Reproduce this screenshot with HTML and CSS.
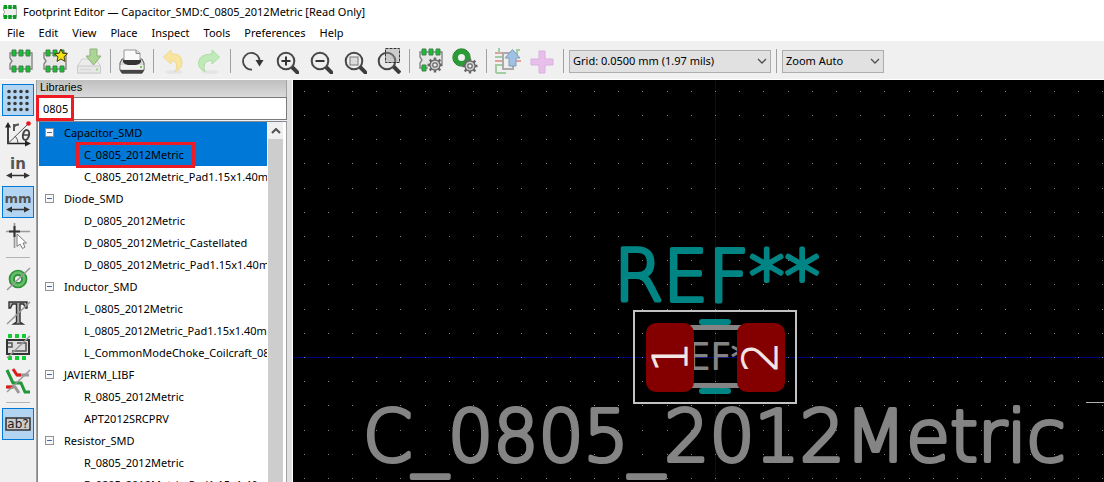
FILE: index.html
```html
<!DOCTYPE html>
<html lang="en">
<head>
<meta charset="utf-8">
<title>Footprint Editor — Capacitor_SMD:C_0805_2012Metric [Read Only]</title>
<link rel="stylesheet" href="styles.css">
</head>
<body>
<svg class="defs" aria-hidden="true">
  <defs>
    <g id="chip">
      <path d="M1 4H23V20H1V15L3 12L1 9Z" fill="#e6e6e6" stroke="#858585" stroke-width="1.4"/>
      <path d="M3 1h4v6H3zM10 1h4v6h-4zM17 1h4v6h-4zM3 17h4v6H3zM10 17h4v6h-4zM17 17h4v6h-4z" fill="#0fc42e" stroke="#4d7a50" stroke-width="1"/>
    </g>
    <g id="lens">
      <path d="M17 17L24 24" stroke="#3c3c3c" stroke-width="4"/>
      <circle cx="11" cy="11" r="8.3" fill="#efefef" stroke="#484848" stroke-width="2"/>
    </g>
    <g id="gear">
      <circle r="5" fill="#ccc" stroke="#666" stroke-width="1.4"/>
      <path d="M0-5V-7.500M0 5V7.500M-5 0H-7.500M5 0H7.500M-3.500-3.500L-5.300-5.300M3.500 3.500L5.300 5.300M-3.500 3.500L-5.300 5.300M3.500-3.500L5.300-5.300" stroke="#666" stroke-width="2.400"/>
      <circle r="4.300" fill="#ccc"/>
      <circle r="2.200" fill="#eee" stroke="#666" stroke-width="1.200"/>
    </g>
    <g id="slash"><path d="M1 23L24 1" stroke="#999" stroke-width="1.500"/></g>
  </defs>
</svg>

<header class="titlebar">
  <svg class="app-icon" viewBox="0 0 24 24"><path d="M1 4H23V20H1V15L3 12L1 9Z" fill="#eee" stroke="#999" stroke-width="1.500"/><path d="M1 0h6v7H1zM9 0h6v7H9zM17 0h6v7h-6zM1 17h6v7H1zM9 17h6v7H9zM17 17h6v7h-6z" fill="#0b9a25"/></svg>
  <h1>Footprint Editor — Capacitor_SMD:C_0805_2012Metric [Read Only]</h1>
</header>

<nav class="menubar">
  <button>File</button><button>Edit</button><button>View</button><button>Place</button><button>Inspect</button><button>Tools</button><button>Preferences</button><button>Help</button>
</nav>

<div class="toolbar" role="toolbar" aria-label="Main">
  <button class="tool" aria-label="New footprint"><svg viewBox="0 0 26 26"><use href="#chip" x="1" y="1"/></svg></button>
  <button class="tool" aria-label="New footprint with wizard"><svg viewBox="0 0 26 26"><use href="#chip" x="1" y="1"/><path d="M19 1L20.800 5.300L25.500 5.700L22 8.800L23 13.400L19 11L15 13.400L16 8.800L12.500 5.700L17.200 5.300Z" fill="#f5e212" stroke="#4a4310"/></svg></button>
  <button class="tool" aria-label="Save"><svg viewBox="0 0 26 26"><path d="M6 11H20L24.500 18V25H1.500V18Z" fill="#ececec" stroke="#cfcfcf"/><path d="M1.500 18H24.500V25H1.500Z" fill="#e7e7e7" stroke="#cacaca"/><path d="M4 21.500H15" stroke="#d6d6d6"/><path d="M20 21.500h2" stroke="#8fe07f" stroke-width="2"/><path d="M14 1h7v7h4L17.500 17L10 8h4Z" fill="#acd494" stroke="#8eb17c"/></svg></button>
  <span class="sep"></span>
  <button class="tool" aria-label="Print"><svg viewBox="0 0 26 26"><path d="M3 11H23L25 15V22L23 25H3L1 22V15Z" fill="#d9d9d9" stroke="#555"/><path d="M5 15V2H17L21 5V15Z" fill="#fafafa" stroke="#999"/><path d="M17 2V5.500H21" fill="#ddd" stroke="#888"/><path d="M4 12H22V14Q20 17 17 17H9Q6 17 4 14Z" fill="#333"/><path d="M1.500 17H24.500V21H1.500Z" fill="#f1f1f1"/><path d="M1 22H25L23 25.500H3Z" fill="#454545"/><path d="M21 19h2" stroke="#6dce43" stroke-width="2"/></svg></button>
  <span class="sep"></span>
  <button class="tool" aria-label="Undo"><svg viewBox="0 0 26 26"><ellipse cx="12" cy="24" rx="9" ry="2" fill="#e5e5e5"/><path d="M1.500 9L9 2V6Q20 5 20 15Q20 21 13 23.500Q16 20 14.500 16Q13 12.500 9 12.500V16Z" fill="#f8e6a0" stroke="#eed98c"/></svg></button>
  <button class="tool" aria-label="Redo"><svg viewBox="0 0 26 26"><ellipse cx="14" cy="24" rx="9" ry="2" fill="#e5e5e5"/><path d="M23.500 9L16 2V6Q3 6 2.500 15Q2.500 21 9 23.500Q7 20 8.500 16Q10 12.500 16 12.500V16Z" fill="#c0eab8" stroke="#abdda3"/></svg></button>
  <span class="sep"></span>
  <button class="tool" aria-label="Refresh"><svg viewBox="0 0 26 26"><path d="M13 21.500A8.300 8.300 0 1 1 20.600 13.500" fill="none" stroke="#484848" stroke-width="1.800"/><path d="M16.500 12H24.500L20.500 18.500Z" fill="#333"/></svg></button>
  <button class="tool" aria-label="Zoom in"><svg viewBox="0 0 26 26"><use href="#lens" x="2" y="2"/><path d="M8.500 13H17.500M13 8.500V17.500" stroke="#333" stroke-width="2"/></svg></button>
  <button class="tool" aria-label="Zoom out"><svg viewBox="0 0 26 26"><use href="#lens" x="2" y="2"/><path d="M8.500 13H17.500" stroke="#333" stroke-width="2"/></svg></button>
  <button class="tool" aria-label="Zoom to fit"><svg viewBox="0 0 26 26"><use href="#lens" x="2" y="2"/><rect x="9" y="9" width="8" height="8" fill="#ddd" stroke="#777"/></svg></button>
  <button class="tool" aria-label="Zoom to selection"><svg viewBox="0 0 26 26"><path d="M18 18L25 25" stroke="#3c3c3c" stroke-width="4"/><circle cx="12" cy="13" r="8.300" fill="#e9e9e9" stroke="#484848" stroke-width="2"/><rect x="10.500" y=".5" width="14" height="14" fill="#999" fill-opacity=".4" stroke="#333" stroke-dasharray="3 1"/></svg></button>
  <span class="sep"></span>
  <button class="tool" aria-label="Footprint properties"><svg viewBox="0 0 26 26"><use href="#chip" x="1"/><path d="M10 16H25V25H10Z" fill="#efefef"/><use href="#gear" x="17" y="17"/></svg></button>
  <button class="tool" aria-label="Default pad properties"><svg viewBox="0 0 26 26"><circle cx="9.500" cy="9.500" r="6" fill="none" stroke="#2a9c35" stroke-width="5"/><circle cx="9.500" cy="9.500" r="8.700" fill="none" stroke="#1a7e25"/><use href="#gear" x="18" y="18"/></svg></button>
  <span class="sep"></span>
  <button class="tool" aria-label="Load footprint from board"><svg viewBox="0 0 26 26"><path d="M0 5H8M0 13H8M20 13H26" stroke="#e2a09a" stroke-width="2"/><path d="M0 9H7M1 25V17H8M1 25H11M22 7V2H25" fill="none" stroke="#a0cda4" stroke-width="2"/><path d="M4 0V5" stroke="#a0cda4" stroke-width="2"/><path d="M8 5H18V21H8Z" fill="#eee" stroke="#aaa" stroke-width="2"/><path d="M14 18V10H10L17.500 1.500L25 10H21V18Z" fill="#9fc1e5" stroke="#839bb5"/></svg></button>
  <button class="tool" aria-label="Insert footprint into board"><svg viewBox="0 0 26 26"><path d="M10 3H16V11H24V17H16V25H10V17H2V11H10Z" fill="#e8bfea" stroke="#dcaee0"/></svg></button>
  <span class="sep"></span>
  <span class="combo combo-grid"><select aria-label="Grid"><option>Grid: 0.0500 mm (1.97 mils)</option></select><svg viewBox="0 0 10 6"><path d="M1 1L5 5L9 1" fill="none" stroke="#505050" stroke-width="1.300"/></svg></span>
  <span class="sep"></span>
  <span class="combo combo-zoom"><select aria-label="Zoom"><option>Zoom Auto</option></select><svg viewBox="0 0 10 6"><path d="M1 1L5 5L9 1" fill="none" stroke="#505050" stroke-width="1.300"/></svg></span>
</div>

<main class="workspace">
  <div class="sidebar" role="toolbar" aria-label="Display options">
    <button class="opt on" aria-label="Show grid" aria-pressed="true"><svg viewBox="0 0 26 26"><path d="M4 4.500H23M4 10.500H23M4 16.500H23M4 22.500H23" stroke="#3a3a3a" stroke-width="3.600" stroke-linecap="round" stroke-dasharray="0 6"/></svg></button>
    <button class="opt" aria-label="Polar coordinates"><svg viewBox="0 0 26 26"><path d="M3 5V22.500H22" fill="none" stroke="#222" stroke-width="1.700"/><path d="M0 6.500L3 1L6 6.500ZM20 19.500L26 22.500L20 25.500Z" fill="#222"/><path d="M3 22.500L22 4M10 15Q13 18 13 22" fill="none" stroke="#555"/><circle cx="23.500" cy="2.500" r="2.300" fill="#f01414"/><path d="M9 10V3M9 6Q10 3.500 14 3.500" fill="none" stroke="#555" stroke-width="2"/><ellipse cx="21" cy="14" rx="3" ry="5" fill="none" stroke="#444" stroke-width="2" transform="rotate(14 21 14)"/><path d="M18 14H24" stroke="#444" stroke-width="1.500"/></svg></button>
    <button class="opt" aria-label="Inches"><svg viewBox="0 0 26 26"><text class="unit" x="13" y="14" text-anchor="middle">in</text><path d="M4 20.500H22" stroke="#333" stroke-width="1.500"/><path d="M1 20.500L7 17.500V23.500ZM25 20.500L19 17.500V23.500Z" fill="#333"/></svg></button>
    <button class="opt on" aria-label="Millimeters" aria-pressed="true"><svg viewBox="0 0 26 26"><text class="unit unit-mm" x="13" y="14" text-anchor="middle">mm</text><path d="M4 20.500H22" stroke="#333" stroke-width="1.500"/><path d="M1 20.500L7 17.500V23.500ZM25 20.500L19 17.500V23.500Z" fill="#333"/></svg></button>
    <button class="opt" aria-label="Full-window crosshair"><svg viewBox="0 0 26 26"><path d="M1 8.500H25M9.500 0V25" stroke="#999" stroke-width="1.700"/><path d="M4 8.500H15M9.500 3V14" stroke="#333" stroke-width="2"/><path d="M12 11V23.500L15 21L17.500 25.500L20 24L18 20H21.500Z" fill="#fff" stroke="#777"/></svg></button>
    <span class="rule"></span>
    <button class="opt" aria-label="Sketch pads"><svg viewBox="0 0 26 26"><circle cx="13" cy="13" r="8.500" fill="#65bd6b" stroke="#2c9137" stroke-width="1.700"/><circle cx="13" cy="13" r="4" fill="#efefef" stroke="#2c9137" stroke-width="1.800"/><use href="#slash" x="1" y="1"/></svg></button>
    <button class="opt" aria-label="Sketch text"><svg viewBox="0 0 26 26"><path d="M4 2H22V8H20.500L18.500 4H15V22L18 24H8.500L11.500 22V4H7.500L5.500 8H4Z" fill="#aaa" stroke="#333" stroke-width="1.400"/><use href="#slash" x="1" y="1"/></svg></button>
    <button class="opt" aria-label="Sketch graphics"><svg viewBox="0 0 26 26"><path d="M3 2H7M10 2H14M17 2H21M3 24H7M10 24H14M17 24H21" stroke="#12cb32" stroke-width="4"/><rect x="2" y="6" width="22" height="14" fill="#ddd" stroke="#333" stroke-width="2"/><path d="M3 9H7V13H3M7 17H21V9H12" fill="none" stroke="#555" stroke-width="1.500"/><use href="#slash" x="1" y="1"/></svg></button>
    <button class="opt" aria-label="High contrast"><svg viewBox="0 0 26 26"><path d="M2 2L8 15H16L20 24H25" fill="none" stroke="#20983a" stroke-width="3"/><path d="M12 7H24M2 19H10L14 25" fill="none" stroke="#999" stroke-width="3"/><path d="M8 1L12 7H16M1 19H8" fill="none" stroke="#dc1b1b" stroke-width="3"/><use href="#slash" x="1" y="1"/></svg></button>
    <span class="rule"></span>
    <button class="opt on" aria-label="Show libraries" aria-pressed="true"><svg viewBox="0 0 26 26"><rect x="1" y="7" width="24" height="12" fill="#ccc" stroke="#333" stroke-width="1.500"/><text class="unit-ab" x="13" y="17" text-anchor="middle">ab?</text></svg></button>
  </div>

  <section class="panel">
    <h2>Libraries</h2>
    <label class="search"><input type="text" value="0805" aria-label="Filter"></label>
    <div class="tree">
      <ul class="groups">
        <li><div class="row group selected"><button class="toggle" aria-label="Collapse"></button>Capacitor_SMD</div>
          <ul><li class="row selected"><span class="marked">C_0805_2012Metric</span></li><li class="row">C_0805_2012Metric_Pad1.15x1.40mm_HandSolder</li></ul></li>
        <li><div class="row group"><button class="toggle" aria-label="Collapse"></button>Diode_SMD</div>
          <ul><li class="row">D_0805_2012Metric</li><li class="row">D_0805_2012Metric_Castellated</li><li class="row">D_0805_2012Metric_Pad1.15x1.40mm_HandSolder</li></ul></li>
        <li><div class="row group"><button class="toggle" aria-label="Collapse"></button>Inductor_SMD</div>
          <ul><li class="row">L_0805_2012Metric</li><li class="row">L_0805_2012Metric_Pad1.15x1.40mm_HandSolder</li><li class="row">L_CommonModeChoke_Coilcraft_0805USB</li></ul></li>
        <li><div class="row group"><button class="toggle" aria-label="Collapse"></button>JAVIERM_LIBF</div>
          <ul><li class="row">R_0805_2012Metric</li><li class="row">APT2012SRCPRV</li></ul></li>
        <li><div class="row group"><button class="toggle" aria-label="Collapse"></button>Resistor_SMD</div>
          <ul><li class="row">R_0805_2012Metric</li><li class="row">R_0805_2012Metric_Pad1.15x1.40mm_HandSolder</li></ul></li>
      </ul>
      <div class="scrollbar"><button aria-label="Scroll up"><svg viewBox="0 0 10 6"><path d="M1 5L5 1L9 5" fill="none" stroke="#505050" stroke-width="2"/></svg></button><div class="thumb"></div></div>
    </div>
  </section>

  <svg class="board" role="img" aria-label="C_0805_2012Metric footprint">
    <g transform="translate(422 277)">
      <path class="axis" d="M-2000 .5H2000M.5-2000V2000"/>
      <path id="grid" class="grid"/>
      <text class="fab-text big" x="-352" y="104">C_0805_2012Metric</text>
      <text class="silk-text big" x="-101" y="-56">REF**</text>
      <text class="fab-text small" x="0" y="12" text-anchor="middle">REF**</text>
      <path class="fab" d="M-25-29.500H27M-25 28.500H27"/>
      <path class="silk" d="M-13-35H13M-13 34H13"/>
      <rect class="pad" x="-69" y="-34" width="48" height="69" rx="10"/>
      <rect class="pad" x="22" y="-34" width="48" height="69" rx="10"/>
      <text class="number" transform="translate(-28 0) rotate(-90)" text-anchor="middle">1</text>
      <text class="number" transform="translate(62 0) rotate(-90)" text-anchor="middle">2</text>
      <rect class="courtyard" x="-81" y="-46" width="162" height="92"/>
      <path class="cursor" d="M371 45.500H411"/>
    </g>
  </svg>
</main>
<script src="grid.js"></script>
</body>
</html>
```

FILE: styles.css
```css
*, *::before, *::after { box-sizing: border-box; }

body {
  margin: 0;
  height: 100vh;
  overflow: hidden;
  display: flex;
  flex-direction: column;
  background: #fff;
  color: #000;
  font: 11px/16px "Noto Sans", "Open Sans", sans-serif;
}

button, input, select { font: inherit; color: inherit; border: 0; padding: 0; margin: 0; background: none; }
ul { list-style: none; margin: 0; padding: 0; }
svg { display: block; }
.defs { position: absolute; width: 0; height: 0; }

.titlebar { display: flex; align-items: center; gap: 6px; height: 24px; padding-left: 3px; flex: none; }
.titlebar h1 { margin: 0; font-size: 11px; font-weight: 400; white-space: nowrap; }
.app-icon { width: 14px; height: 14px; }

.menubar { display: flex; gap: 14px; height: 17px; padding-left: 7px; flex: none; }

.toolbar { display: flex; align-items: center; height: 39px; padding: 2px 0 0 4px; flex: none; background: #f0f0f0; border-bottom: 1px solid #fff; }
.tool { width: 34px; height: 34px; flex: none; display: grid; place-items: center; }
.tool svg, .opt svg { width: 26px; height: 26px; }
.sep { width: 9px; height: 24px; flex: none; background: linear-gradient(#a0a0a0, #a0a0a0) 4px 0 / 1px 100% no-repeat; }
.combo { display: grid; align-items: center; height: 23px; margin: 0 1px; background: #e1e1e1; border: 1px solid #adadad; }
.combo-grid { width: 202px; }
.combo-zoom { width: 102px; }
.combo select, .combo svg { grid-area: 1 / 1; }
.combo select { appearance: none; width: 100%; height: 21px; padding-left: 3px; }
.combo svg { width: 10px; height: 6px; justify-self: end; margin-right: 3px; pointer-events: none; }

.workspace { display: flex; flex: 1; min-height: 0; background: #f0f0f0; }
.sidebar { width: 36px; flex: none; display: flex; flex-direction: column; gap: 2px; padding: 4px 0 0 2px; }
.opt { width: 32px; height: 32px; flex: none; display: grid; place-items: center; border: 1px solid transparent; }
.opt.on { background: #b3d5f2; border-color: #0078d7; }
.rule { width: 24px; height: 7px; margin-left: 4px; flex: none; background: linear-gradient(#b4b4b4, #b4b4b4) 0 3px / 100% 1px no-repeat; }
.unit { font: bold 15px "DejaVu Sans", sans-serif; fill: #555; }
.unit-mm { font-size: 13px; }
.unit-ab { font: 12px "DejaVu Sans", sans-serif; fill: #222; }

.panel { width: 257px; flex: none; display: flex; flex-direction: column; border-left: 1px solid #a0a0a0; border-right: 1px solid #fff; box-shadow: inset -5px 0 #e0e0e0; }
.panel h2 { margin: 0 5px 0 0; height: 17px; padding-left: 3px; font: 11px/15px "Liberation Sans", sans-serif; background: linear-gradient(#bfbfbf, #dadada); border-right: 1px solid #a0a0a0; }
.search { position: relative; display: block; height: 23px; margin-right: 5px; }
.search input { width: 100%; height: 23px; padding-left: 5px; background: #fff; border: 1px solid #7a7a7a; }
.search::after, .marked::after { content: ""; position: absolute; border: 3px solid #ed1c24; pointer-events: none; }
.search::after { left: -1px; top: -2px; width: 38px; height: 26px; }
.tree { flex: 1; min-height: 0; display: flex; margin: 1px 5px 0 0; padding: 0 2px 0 1px; background: #fff; border: 1px solid #828790; border-bottom: 0; border-right-color: #a0a0a0; }
.groups { flex: 1; min-width: 0; overflow: hidden; }
.row { height: 22px; line-height: 21px; padding: 0 0 1px 45px; white-space: nowrap; }
.group { display: flex; align-items: center; gap: 10px; padding-left: 6px; }
.selected { background: #0078d7; }
.toggle { width: 9px; height: 9px; background: linear-gradient(#4b63a7, #4b63a7) center / 5px 1px no-repeat, #f8f8f8; border: 1px solid #919191; }
.marked { position: relative; display: inline-block; }
.marked::after { left: -8px; right: -11px; top: -2px; bottom: -3px; }
.scrollbar { width: 17px; flex: none; display: flex; flex-direction: column; padding: 0 1px; }
.scrollbar button { height: 17px; display: grid; place-items: center; background: #f0f0f0; }
.scrollbar svg { width: 10px; height: 6px; }
.thumb { flex: 1; background: #cdcdcd; }

.board { flex: 1; min-width: 0; height: 100%; background: #000; }
.axis { stroke: #000084; fill: none; }
.grid { stroke: #848484; fill: none; shape-rendering: crispEdges; }
.fab { stroke: #848484; stroke-width: 5px; }
.silk { stroke: #008484; stroke-width: 6px; stroke-linecap: round; }
.pad { fill: #840000; }
.courtyard { fill: none; stroke: #c2c2c2; stroke-width: 2px; }
.cursor { stroke: #b0b0b0; }
.fab-text, .silk-text { font-family: "DejaVu Sans", sans-serif; font-weight: 200; stroke-linejoin: round; stroke-linecap: round; }
.fab-text { fill: #848484; stroke: #848484; }
.silk-text { fill: #008484; stroke: #008484; }
.big { font-size: 71px; stroke-width: 4px; }
.small { font-size: 36px; stroke-width: 2px; }
.number { font: 200 48px "DejaVu Sans", sans-serif; fill: #f2e6e6; stroke: #f2e6e6; stroke-width: 1px; }
```

FILE: grid.js
```js
// Grid dots, snapped to whole pixels around the board origin.
const pitch = 24.2;
const reach = 80;
let d = "";
for (let i = -reach; i <= reach; i++) {
  for (let j = -reach; j <= reach; j++) {
    d += `M${Math.round(i * pitch)} ${Math.round(j * pitch) + 0.5}h1`;
  }
}
document.getElementById("grid").setAttribute("d", d);
```
